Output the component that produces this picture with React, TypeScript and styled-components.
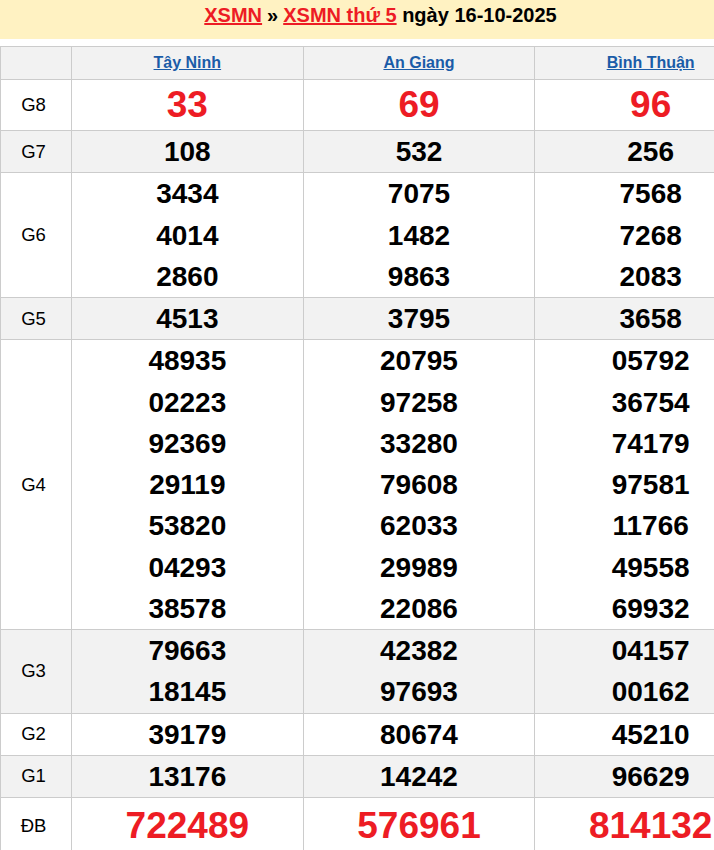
import React from "react";
import styled, { createGlobalStyle } from "styled-components";

const Global = createGlobalStyle`
  html, body { margin: 0; padding: 0; background: #fff; overflow: hidden; }
  body { font-family: Arial, "Liberation Sans", Helvetica, sans-serif; }
`;

const Wrap = styled.div`
  width: 767px;
`;

const Banner = styled.h2`
  margin: 0 0 7px;
  height: 39px;
  background: #fff2c2;
  display: flex;
  align-items: flex-start;
  justify-content: center;
  padding: 4px 6px 0 0;
  box-sizing: border-box;
  font-size: 20px;
  font-weight: bold;
  color: #000;
  line-height: 23px;
`;

const RedLink = styled.a`
  color: #ed1c24;
  text-decoration: underline;
`;

const Sep = styled.span`
  padding: 0 5px;
`;

const Table = styled.table`
  width: 767px;
  border-collapse: collapse;
  table-layout: fixed;
`;

const Row = styled.tr<{ $grey?: boolean }>`
  background: ${(p) => (p.$grey ? "#f2f2f2" : "#fff")};
`;

const Label = styled.td`
  border: 1px solid #cccccc;
  text-align: center;
  font-size: 18.5px;
  color: #000;
  padding: 0 5px 0 0;
`;

const Head = styled.th`
  border: 1px solid #cccccc;
  height: 32px;
  padding: 0;
  text-align: center;
  font-size: 16px;
  font-weight: bold;
  vertical-align: middle;
`;

const Province = styled.a`
  color: #1a5ca8;
  text-decoration: underline;
`;

const Cell = styled.td`
  border: 1px solid #cccccc;
  text-align: center;
  padding: 0;
  vertical-align: middle;
`;

const Num = styled.div<{ $big?: boolean; $tall?: boolean }>`
  font-weight: bold;
  font-size: ${(p) => (p.$big ? "37px" : "28px")};
  line-height: ${(p) => (p.$tall ? "56px" : p.$big ? "50px" : "41.25px")};
  color: ${(p) => (p.$big ? "#ed1c24" : "#000")};
`;

type Prize = { label: string; big?: boolean; tall?: boolean; data: string[][] };

const provinces = ["Tây Ninh", "An Giang", "Bình Thuận"];

const prizes: Prize[] = [
  { label: "G8", big: true, data: [["33"], ["69"], ["96"]] },
  { label: "G7", data: [["108"], ["532"], ["256"]] },
  {
    label: "G6",
    data: [
      ["3434", "4014", "2860"],
      ["7075", "1482", "9863"],
      ["7568", "7268", "2083"],
    ],
  },
  { label: "G5", data: [["4513"], ["3795"], ["3658"]] },
  {
    label: "G4",
    data: [
      ["48935", "02223", "92369", "29119", "53820", "04293", "38578"],
      ["20795", "97258", "33280", "79608", "62033", "29989", "22086"],
      ["05792", "36754", "74179", "97581", "11766", "49558", "69932"],
    ],
  },
  {
    label: "G3",
    data: [
      ["79663", "18145"],
      ["42382", "97693"],
      ["04157", "00162"],
    ],
  },
  { label: "G2", data: [["39179"], ["80674"], ["45210"]] },
  { label: "G1", data: [["13176"], ["14242"], ["96629"]] },
  { label: "ĐB", big: true, tall: true, data: [["722489"], ["576961"], ["814132"]] },
];

export default function App() {
  return (
    <Wrap>
      <Global />
      <Banner>
        <RedLink href="#">XSMN</RedLink>
        <Sep>»</Sep>
        <RedLink href="#">XSMN thứ 5</RedLink>
        &nbsp;ngày 16-10-2025
      </Banner>
      <Table>
        <colgroup>
          <col style={{ width: 71 }} />
          <col />
          <col />
          <col />
        </colgroup>
        <thead>
          <Row $grey>
            <Head />
            {provinces.map((p) => (
              <Head key={p}>
                <Province href="#">{p}</Province>
              </Head>
            ))}
          </Row>
        </thead>
        <tbody>
          {prizes.map((pr, i) => (
            <Row key={pr.label} $grey={i % 2 === 1}>
              <Label>{pr.label}</Label>
              {pr.data.map((col, ci) => (
                <Cell key={ci}>
                  {col.map((n, ni) => (
                    <Num key={ni} $big={pr.big} $tall={pr.tall}>
                      {n}
                    </Num>
                  ))}
                </Cell>
              ))}
            </Row>
          ))}
        </tbody>
      </Table>
    </Wrap>
  );
}
